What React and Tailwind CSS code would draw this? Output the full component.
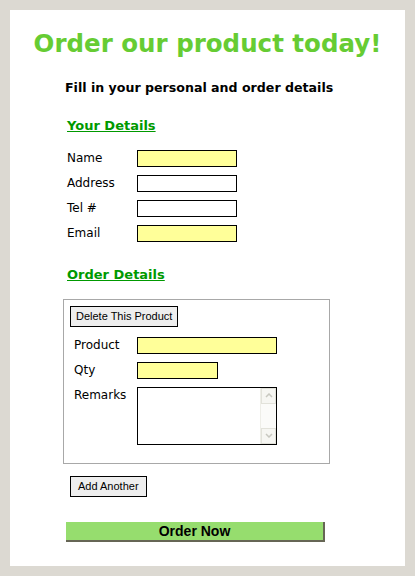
import React from "react";

const Row = ({label, bg = "bg-white", w = "w-[100px]", pl = "pl-0"}) => (
    <div className={`flex items-center h-[17px] ${pl}`}>
        <span className="w-[70px] text-[12px] leading-none text-black">{label}</span>
        <input className={`${w} h-[17px] border border-black ${bg} outline-none`}/>
    </div>
);

const App = () => {
    return (
        <div className="bg-[#dcd9d2] p-[10px] font-['DejaVu_Sans',Verdana,sans-serif]">
            <div className="bg-white h-[556px] flex flex-col">
                {/* title */}
                <h1 className="text-center text-[#66cc33] font-bold text-[24.5px] leading-none mt-[22px] h-[26px]">
                    Order our product today!
                </h1>
                <h2 className="pl-[55px] mt-[24px] text-[12.6px] font-bold leading-none text-black">
                    Fill in your personal and order details
                </h2>

                <div className="pl-[57px] mt-[24px]">
                    <h3 className="text-[13px] font-bold underline text-[#009900] leading-none">Your Details</h3>
                    <div className="flex flex-col gap-[8px] mt-[18px]">
                        <Row label="Name" bg="bg-[#ffff99]"/>
                        <Row label="Address"/>
                        <Row label="Tel #"/>
                        <Row label="Email" bg="bg-[#ffff99]"/>
                    </div>

                    <h3 className="mt-[26px] text-[13px] font-bold underline text-[#009900] leading-none">Order Details</h3>
                </div>

                <div className="ml-[53px] mt-[18px] w-[267px] h-[165px] border border-[#a8a8a8] pt-[6px] pl-[6px] flex flex-col">
                    <div className="flex">
                        <button className="h-[21px] px-[5px] border border-black bg-[#eeeeee] text-[11px] font-['Liberation_Sans',Arial,sans-serif] leading-none">
                            Delete This Product
                        </button>
                    </div>
                    <div className="flex flex-col gap-[8px] mt-[10px] pl-[4px]">
                        <div className="flex items-center h-[17px]">
                            <span className="w-[63px] text-[12px] leading-none">Product</span>
                            <input className="w-[140px] h-[17px] border border-black bg-[#ffff99] outline-none"/>
                        </div>
                        <div className="flex items-center h-[17px]">
                            <span className="w-[63px] text-[12px] leading-none">Qty</span>
                            <input className="w-[81px] h-[17px] border border-black bg-[#ffff99] outline-none"/>
                        </div>
                        <div className="flex items-start">
                            <span className="w-[63px] text-[12px] leading-none pt-[2px]">Remarks</span>
                            <div className="w-[140px] h-[58px] border border-black flex">
                                <div className="flex-1"></div>
                                <div className="w-[16px] bg-[#fbfbf9] border-l border-[#eeeee8] flex flex-col justify-between">
                                    <div className="h-[16px] border border-[#e2e2da] bg-[#f6f6f2] flex items-center justify-center">
                                        <svg width="8" height="5" viewBox="0 0 8 5"><path d="M1 4 L4 1 L7 4" fill="none" stroke="#c8c8c0" strokeWidth="1.5"/></svg>
                                    </div>
                                    <div className="h-[16px] border border-[#e2e2da] bg-[#f6f6f2] flex items-center justify-center">
                                        <svg width="8" height="5" viewBox="0 0 8 5"><path d="M1 1 L4 4 L7 1" fill="none" stroke="#c8c8c0" strokeWidth="1.5"/></svg>
                                    </div>
                                </div>
                            </div>
                        </div>
                    </div>
                </div>

                <div className="pl-[60px] mt-[12px] flex">
                    <button className="h-[21px] px-[7px] border border-black bg-[#eeeeee] text-[11px] font-['Liberation_Sans',Arial,sans-serif] leading-none">
                        Add Another
                    </button>
                </div>

                <div className="pl-[56px] mt-[25px] flex">
                    <button className="w-[259px] h-[20px] bg-[#96dd6e] border-r-2 border-b-2 border-[#666655] text-[14px] font-bold font-['Liberation_Sans',Arial,sans-serif] leading-none text-black">
                        Order Now
                    </button>
                </div>
            </div>
        </div>
    );
};

export default App;
